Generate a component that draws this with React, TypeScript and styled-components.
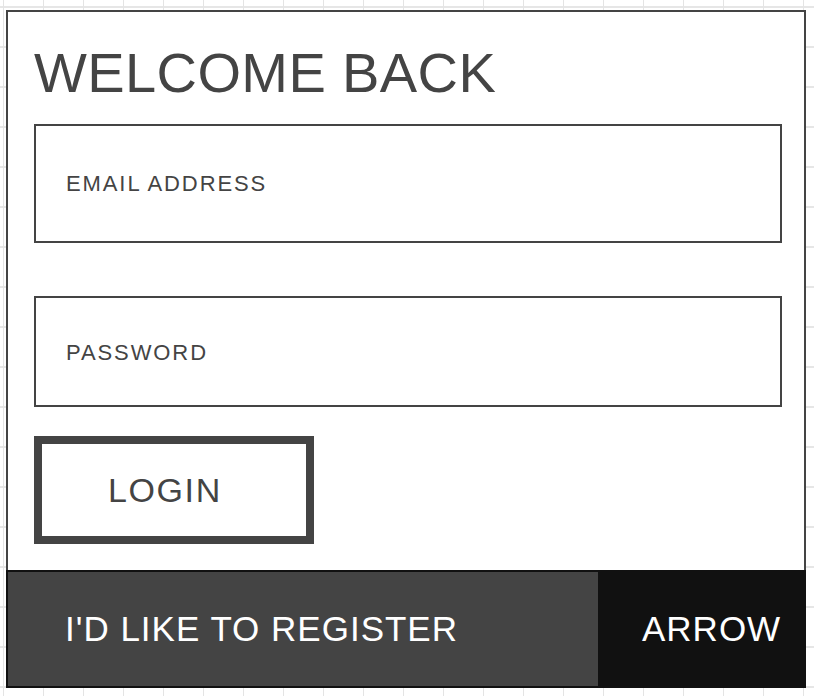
import * as React from 'react'
import styled, { createGlobalStyle } from 'styled-components'

const GlobalStyle = createGlobalStyle`
  html, body {
    margin: 0;
    padding: 0;
  }
  body {
    min-height: 100vh;
    font-family: "Liberation Sans", Arial, sans-serif;
    background-color: #fff;
    background-image:
      linear-gradient(to right, #e4e4e4 1px, transparent 1px),
      linear-gradient(to bottom, #e6e6e6 2px, transparent 2px);
    background-size: 40px 40px;
    background-position: 3px 0, 0 6px;
  }
`

const Page = styled.div`
  padding: 10px 0 0 6px;
`

const Card = styled.div`
  width: 800px;
  display: flex;
  flex-direction: column;
`

const Content = styled.form`
  background: #fff;
  border: 2px solid #444;
  border-bottom: none;
  padding: 29px 22px 26px 26px;
  display: flex;
  flex-direction: column;
`

const Title = styled.h1`
  margin: 0 0 19px;
  font-size: 56px;
  line-height: 64px;
  font-weight: 400;
  color: #444;
  letter-spacing: 0.4px;
`

const Field = styled.input<{ $height: number; $shift?: number }>`
  box-sizing: border-box;
  width: 748px;
  height: ${(p) => p.$height}px;
  margin: 0;
  border: 2px solid #444;
  border-radius: 0;
  padding: ${(p) => p.$shift || 0}px 0 0 30px;
  font-family: "Liberation Sans", Arial, sans-serif;
  font-size: 22px;
  letter-spacing: 1.9px;
  color: #444;
  background: #fff;
  outline: none;

  &::placeholder {
    color: #444;
    opacity: 1;
  }
`

const FieldGap = styled.div<{ $size: number }>`
  height: ${(p) => p.$size}px;
`

const LoginButton = styled.button`
  box-sizing: border-box;
  width: 280px;
  height: 108px;
  border: 8px solid #444;
  border-radius: 0;
  background: #fff;
  padding: 0 0 0 66px;
  text-align: left;
  font-family: "Liberation Sans", Arial, sans-serif;
  font-size: 34px;
  letter-spacing: 1.6px;
  color: #444;
  cursor: pointer;
`

const Footer = styled.div`
  box-sizing: border-box;
  height: 118px;
  border: 2px solid #111;
  background: #111;
  display: flex;
`

const FooterLink = styled.a<{ $dark?: boolean }>`
  display: flex;
  align-items: center;
  box-sizing: border-box;
  height: 100%;
  background: ${(p) => (p.$dark ? '#111' : '#444')};
  flex: ${(p) => (p.$dark ? '1' : '0 0 590px')};
  padding-left: ${(p) => (p.$dark ? '44px' : '57px')};
  font-size: 35px;
  letter-spacing: 1px;
  color: #fff;
  text-decoration: none;
  cursor: pointer;
`

export default function App() {
  return (
    <>
      <GlobalStyle />
      <Page>
        <Card>
          <Content onSubmit={(e) => e.preventDefault()}>
            <Title>WELCOME BACK</Title>
            <Field $height={119} type="email" placeholder="EMAIL ADDRESS" />
            <FieldGap $size={53} />
            <Field $height={111} $shift={3} type="password" placeholder="PASSWORD" />
            <FieldGap $size={29} />
            <LoginButton type="submit">LOGIN</LoginButton>
          </Content>
          <Footer>
            <FooterLink>I'D LIKE TO REGISTER</FooterLink>
            <FooterLink $dark>ARROW</FooterLink>
          </Footer>
        </Card>
      </Page>
    </>
  )
}
